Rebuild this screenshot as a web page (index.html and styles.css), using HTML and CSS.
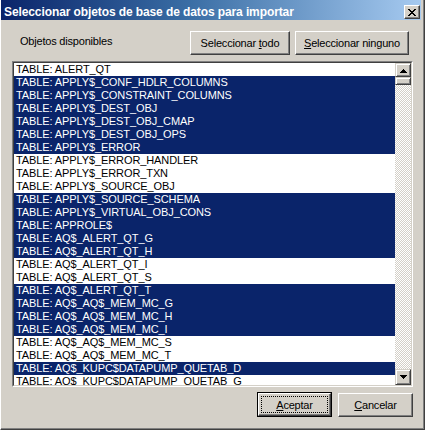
FILE: index.html
```html
<!DOCTYPE html>
<html>
<head>
<meta charset="utf-8">
<link rel="stylesheet" href="styles.css">
</head>
<body>
<div class="window">
  <div class="titlebar">
    <span class="title">Seleccionar objetos de base de datos para importar</span>
    <div class="close">
      <svg width="8" height="7" viewBox="0 0 8 7" shape-rendering="crispEdges">
        <path d="M0 0h2v1H0zM6 0h2v1H6zM1 1h2v1H1zM5 1h2v1H5zM2 2h4v1H2zM3 3h2v1H3zM2 4h4v1H2zM1 5h2v1H1zM5 5h2v1H5zM0 6h2v1H0zM6 6h2v1H6z" fill="#000"/>
      </svg>
    </div>
  </div>

  <div class="top-row">
    <span class="label">Objetos disponibles</span>
    <div class="btn btn-todo"><span>Seleccionar <u>t</u>odo</span></div>
    <div class="btn btn-ninguno"><span><u>S</u>eleccionar ninguno</span></div>
  </div>

  <div class="list">
    <div class="list-inner">
      <div class="rows">
        <div class="row">TABLE: ALERT_QT</div>
        <div class="row sel">TABLE: APPLY$_CONF_HDLR_COLUMNS</div>
        <div class="row sel">TABLE: APPLY$_CONSTRAINT_COLUMNS</div>
        <div class="row sel">TABLE: APPLY$_DEST_OBJ</div>
        <div class="row sel">TABLE: APPLY$_DEST_OBJ_CMAP</div>
        <div class="row sel">TABLE: APPLY$_DEST_OBJ_OPS</div>
        <div class="row sel">TABLE: APPLY$_ERROR</div>
        <div class="row">TABLE: APPLY$_ERROR_HANDLER</div>
        <div class="row">TABLE: APPLY$_ERROR_TXN</div>
        <div class="row">TABLE: APPLY$_SOURCE_OBJ</div>
        <div class="row sel">TABLE: APPLY$_SOURCE_SCHEMA</div>
        <div class="row sel">TABLE: APPLY$_VIRTUAL_OBJ_CONS</div>
        <div class="row sel">TABLE: APPROLE$</div>
        <div class="row sel">TABLE: AQ$_ALERT_QT_G</div>
        <div class="row sel">TABLE: AQ$_ALERT_QT_H</div>
        <div class="row">TABLE: AQ$_ALERT_QT_I</div>
        <div class="row">TABLE: AQ$_ALERT_QT_S</div>
        <div class="row sel">TABLE: AQ$_ALERT_QT_T</div>
        <div class="row sel">TABLE: AQ$_AQ$_MEM_MC_G</div>
        <div class="row sel">TABLE: AQ$_AQ$_MEM_MC_H</div>
        <div class="row sel">TABLE: AQ$_AQ$_MEM_MC_I</div>
        <div class="row">TABLE: AQ$_AQ$_MEM_MC_S</div>
        <div class="row">TABLE: AQ$_AQ$_MEM_MC_T</div>
        <div class="row sel">TABLE: AQ$_KUPC$DATAPUMP_QUETAB_D</div>
        <div class="row">TABLE: AQ$_KUPC$DATAPUMP_QUETAB_G</div>
      </div>
      <div class="scrollbar">
        <div class="sb-btn sb-up">
          <svg width="7" height="4" viewBox="0 0 7 4" shape-rendering="crispEdges">
            <path d="M3 0h1v1H3zM2 1h3v1H2zM1 2h5v1H1zM0 3h7v1H0z" fill="#000"/>
          </svg>
        </div>
        <div class="sb-thumb"></div>
        <div class="sb-track"></div>
        <div class="sb-btn sb-down">
          <svg width="7" height="4" viewBox="0 0 7 4" shape-rendering="crispEdges">
            <path d="M0 0h7v1H0zM1 1h5v1H1zM2 2h3v1H2zM3 3h1v1H3z" fill="#000"/>
          </svg>
        </div>
      </div>
    </div>
  </div>

  <div class="actions">
    <div class="btn-default">
      <div class="btn btn-inner">
        <div class="focus"><span><u>A</u>ceptar</span></div>
      </div>
    </div>
    <div class="btn btn-cancel"><span><u>C</u>ancelar</span></div>
  </div>
</div>
</body>
</html>
```
FILE: styles.css
```css
html, body {
  margin: 0;
  padding: 0;
  background: #d4d0c8;
}

body {
  font-family: "Liberation Sans", Arial, sans-serif;
  font-size: 11px;
  color: #000;
}

.window {
  width: 425px;
  height: 430px;
  box-sizing: border-box;
  background: #d4d0c8;
  border-left: 1px solid #ffffff;
  border-right: 1px solid #404040;
  border-bottom: 1px solid #404040;
  box-shadow: inset -1px -1px 0 #808080;
  padding-right: 3px;
  display: flex;
  flex-direction: column;
  overflow: hidden;
}

.titlebar {
  height: 20px;
  flex: none;
  display: flex;
  align-items: flex-start;
  padding: 0 1px 0 3px;
  background: linear-gradient(to right, #0a246a 0%, #3a6ea5 45%, #a6caf0 100%);
}

.title {
  margin-top: 5px;
  line-height: 14px;
  font-size: 12px;
  font-weight: bold;
  color: #ffffff;
  letter-spacing: -0.1px;
  white-space: nowrap;
}

.close {
  margin-left: auto;
  margin-top: 5px;
  width: 16px;
  height: 14px;
  box-sizing: border-box;
  background: #d4d0c8;
  border: 1px solid;
  border-color: #ffffff #404040 #404040 #ffffff;
  box-shadow: inset -1px -1px 0 #808080;
  display: flex;
  align-items: flex-start;
  justify-content: flex-start;
  padding: 3px 0 0 3px;
}

.close svg {
  display: block;
}

.top-row {
  display: flex;
  align-items: flex-start;
  margin-top: 11px;
  padding: 0 12px 0 19px;
  gap: 5px;
}

.label {
  margin-top: 4px;
  line-height: 13px;
  letter-spacing: -0.2px;
  margin-right: auto;
  white-space: nowrap;
}

.btn {
  box-sizing: border-box;
  height: 24px;
  background: #d4d0c8;
  border: 1px solid;
  border-color: #ffffff #404040 #404040 #ffffff;
  box-shadow: inset -1px -1px 0 #808080;
  display: flex;
  align-items: center;
  justify-content: center;
  letter-spacing: -0.2px;
  white-space: nowrap;
}

.btn u {
  text-decoration: underline;
  text-underline-offset: 1px;
}

.btn-todo {
  width: 100px;
}

.btn-ninguno {
  width: 114px;
}

.list {
  margin: 6px 8px 0 11px;
  height: 326px;
  box-sizing: border-box;
  border: 1px solid;
  border-color: #808080 #ffffff #ffffff #808080;
  flex: none;
}

.list-inner {
  height: 100%;
  box-sizing: border-box;
  border: 1px solid;
  border-color: #404040 #d4d0c8 #d4d0c8 #404040;
  display: flex;
  background: #ffffff;
}

.rows {
  flex: 1;
  overflow: hidden;
}

.row {
  height: 13px;
  line-height: 13px;
  padding-left: 2px;
  white-space: nowrap;
  letter-spacing: -0.1px;
  color: #000;
}

.row.sel {
  background: #0a246a;
  color: #ffffff;
}

.scrollbar {
  width: 16px;
  flex: none;
  display: flex;
  flex-direction: column;
}

.sb-btn {
  box-sizing: border-box;
  background: #d4d0c8;
  border: 1px solid;
  border-color: #d4d0c8 #404040 #404040 #d4d0c8;
  box-shadow: inset 1px 1px 0 #ffffff, inset -1px -1px 0 #808080;
  display: flex;
  justify-content: flex-start;
  flex: none;
}

.sb-btn svg {
  display: block;
}

.sb-up {
  height: 14px;
  padding: 5px 0 0 4px;
}

.sb-down {
  height: 16px;
  padding: 5px 0 0 4px;
}

.sb-thumb {
  flex: none;
  height: 8px;
  box-sizing: border-box;
  background: #d4d0c8;
  border: 1px solid;
  border-color: #d4d0c8 #404040 #404040 #d4d0c8;
  box-shadow: inset 1px 1px 0 #ffffff, inset -1px -1px 0 #808080;
}

.sb-track {
  flex: 1;
  background-color: #ffffff;
  background-image: repeating-conic-gradient(#d4d0c8 0% 25%, #ffffff 0% 50%);
  background-size: 2px 2px;
}

.actions {
  display: flex;
  justify-content: flex-end;
  align-items: flex-start;
  gap: 6px;
  margin-top: 5px;
  padding-right: 8px;
}

.btn-default {
  width: 75px;
  height: 25px;
  box-sizing: border-box;
  border: 1px solid #000000;
  display: flex;
}

.btn-inner {
  flex: 1;
  height: auto;
  padding: 2px;
}

.focus {
  flex: 1;
  align-self: stretch;
  box-sizing: border-box;
  border: 1px dotted #000000;
  display: flex;
  align-items: center;
  justify-content: center;
}

.btn-cancel {
  width: 75px;
  height: 24px;
  margin-top: 1px;
}
```
